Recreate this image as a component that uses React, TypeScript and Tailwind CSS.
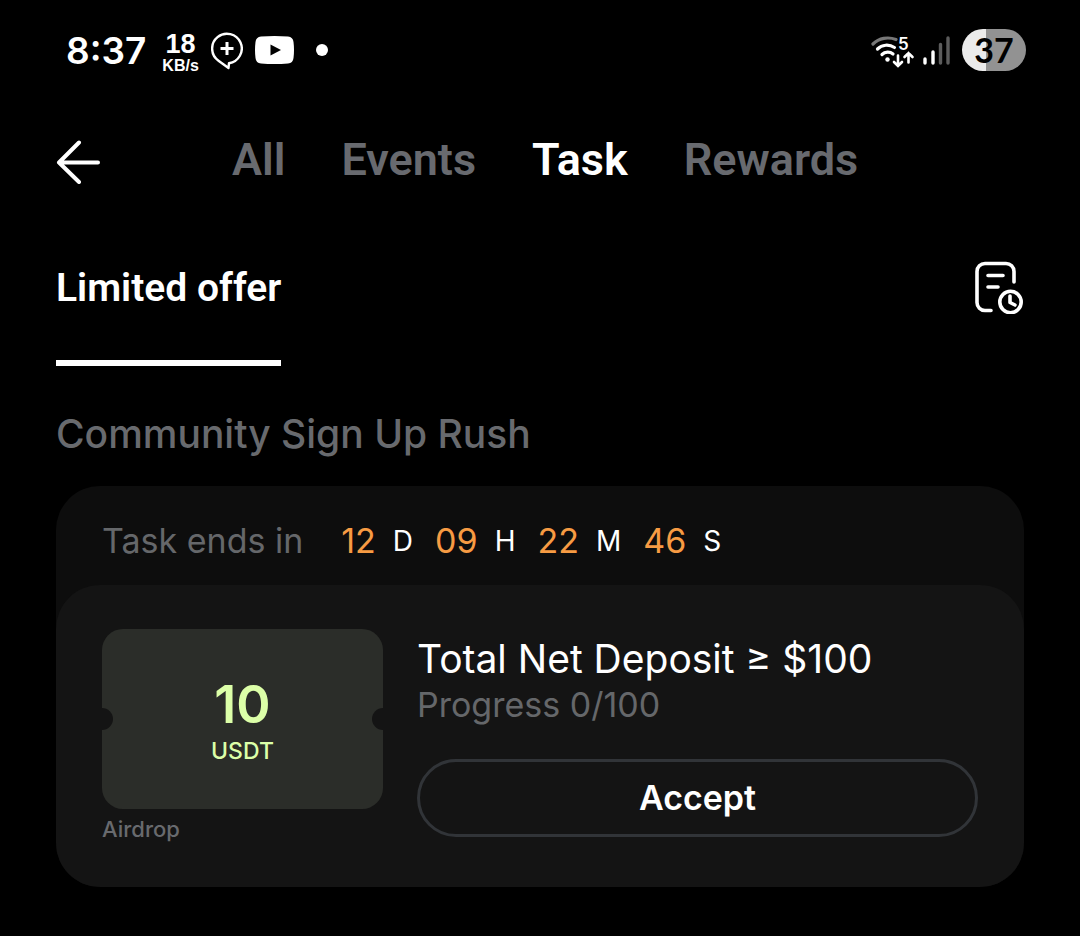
import React from 'react';

const tabs = ["All", "Events", "Task", "Rewards"];

const countdown = [
  { value: "12", unit: "D" },
  { value: "09", unit: "H" },
  { value: "22", unit: "M" },
  { value: "46", unit: "S" }
];

function StatusBar() {
  return (
    <div className="h-[100px] pl-[66px] pr-[54px] flex items-center justify-between">
      <div className="flex items-center">
        <span className="pt-px font-semibold text-[37px] leading-[44px]">8:37</span>
        <div className="ml-4 pt-1 flex flex-col items-center font-['Liberation_Sans'] font-bold">
          <span className="text-[27px] leading-7">18</span>
          <span className="text-base leading-4">KB/s</span>
        </div>
        <svg className="ml-3 w-8 h-10" viewBox="0 0 32 40" fill="none" stroke="currentColor" strokeWidth="2.4" strokeLinejoin="round">
          <path d="M18 33.200A14.800 14.800 0 1 0 7.500 30.700L17.500 38Z" />
          <path d="M16 12v13M9.500 18.500h13" strokeWidth="3" />
        </svg>
        <svg className="ml-3 w-[39px] h-7" viewBox="0 0 39 28">
          <path d="M6 .5Q19.500-.5 33 .5Q38 1 38.500 6Q39.500 14 38.500 22Q38 27 33 27.500Q19.500 28.500 6 27.500Q1 27 .5 22Q-.5 14 .5 6Q1 1 6 .5Z" fill="#fff" />
          <path d="M15.500 8.500v11L26 14z" fill="#000" />
        </svg>
        <span className="ml-[22px] w-3 h-3 rounded-full bg-white" />
      </div>

      <div className="flex items-center">
        {/* wifi with band number and traffic arrows */}
        <div className="relative">
          <svg className="w-11 h-9" viewBox="0 0 44 36" fill="none" stroke="#fff" strokeWidth="3.200" strokeLinecap="round">
            <path d="M2 12C8 6 17 4.500 25 7.500" stroke="#777" />
            <path d="M6.500 17C11 12.500 18 12 23.500 15.500" />
            <path d="M11 22.500C14 19.500 19 19.500 22 22" />
            <circle cx="16.500" cy="27.500" r="2.200" fill="#fff" stroke="none" />
            <path d="M27 23.500v10M23 30l4 4 4-4" strokeWidth="2.600" />
            <path d="M37.500 30.500V21M33.500 25l4-4 4 4" strokeWidth="2.600" />
          </svg>
          <span className="absolute left-[27px] top-[2px] font-semibold text-[17px] leading-5">5</span>
        </div>
        <svg className="ml-2 w-7 h-8" viewBox="0 0 28 32" strokeWidth="3.400" strokeLinecap="round">
          <path d="M2 25v4M10 18v11" stroke="#fff" />
          <path d="M17.500 10.500v18.500M25 4v25" stroke="#5c5c5c" />
        </svg>
        <div className="ml-[11px] w-16 h-[42px] rounded-full bg-linear-to-r from-[#ebebeb] from-37% to-[#929292] to-37% text-black flex items-center justify-center font-['Lato'] font-bold text-[34px] leading-[40px]">
          37
        </div>
      </div>
    </div>
  );
}

function Ticket() {
  return (
    <div>
      <div className="relative overflow-hidden w-[281px] h-[180px] rounded-[21px] bg-[#2b2d29] text-[#dcffa8] flex flex-col items-center justify-center">
        <span className="absolute -left-[11px] top-[79px] w-[22px] h-[22px] rounded-full bg-[#141414]" />
        <span className="absolute -right-[11px] top-[79px] w-[22px] h-[22px] rounded-full bg-[#141414]" />
        <span className="pt-2 font-semibold text-[52px] leading-[56px]">10</span>
        <span className="font-medium text-[23px] leading-9">USDT</span>
      </div>
      <p className="mt-[2px] font-medium text-[22px] leading-9 text-[#686a6e]">Airdrop</p>
    </div>
  );
}

export default function App() {
  return (
    <div className="min-h-screen bg-black text-white font-['Inter',sans-serif]">
      <StatusBar />

      <header className="px-14 h-[124px] flex items-center">
        <button aria-label="Back">
          <svg className="w-11 h-11" viewBox="0 0 44 44" fill="none" stroke="currentColor" strokeWidth="4" strokeLinecap="round" strokeLinejoin="round">
            <path d="M42 22.500H3M23 2.500L3 22.500L23 42" />
          </svg>
        </button>
        <nav className="ml-[132px] pb-1 flex gap-14 font-['Roboto'] font-semibold text-[45px] leading-[52px]">
          {tabs.map((tab) => (
            <button key={tab} className={tab === "Task" ? "text-white" : "text-[#686a6f]"}>
              {tab}
            </button>
          ))}
        </nav>
      </header>

      <div className="px-14 flex items-start justify-between">
        <button className="h-[142px] pt-10 flex items-start border-b-6 border-white font-['Roboto'] font-semibold text-[39px] leading-[48px]">
          Limited offer
        </button>
        <button aria-label="Task history" className="mt-9">
          <svg className="w-[50px] h-[54px]" viewBox="0 0 50 54" fill="none" stroke="currentColor" strokeWidth="3.600" strokeLinecap="round" strokeLinejoin="round">
            <path d="M17 50.500H11a8 8 0 0 1-8-8V11.500a8 8 0 0 1 8-8H32a8 8 0 0 1 8 8V22" />
            <path d="M14 15.500h15M14 27h10" />
            <circle cx="36.500" cy="42" r="10.700" />
            <path d="M36 36v6.500l5 2.500" />
          </svg>
        </button>
      </div>

      <main className="px-14 pb-12">
        <h2 className="pt-[42px] pb-[2px] font-medium text-[39px] leading-[52px] text-[#686a6e]">Community Sign Up Rush</h2>

        <section className="mt-6 rounded-[44px] bg-[#0d0d0d]">
          <div className="h-[99px] pt-[10px] px-[46px] flex items-center text-[34px] leading-[44px]">
            <span className="text-[#65676a]">Task ends in</span>
            <div className="ml-[38px] flex items-center gap-[22px]">
              {countdown.map((part) => (
                <div key={part.unit} className="flex items-center gap-[17px]">
                  <span className="text-[#f79b43]">{part.value}</span>
                  <span className="text-[28px]">{part.unit}</span>
                </div>
              ))}
            </div>
          </div>

          <div className="rounded-[44px] bg-[#141414] pt-11 pb-10 px-[46px] flex gap-[34px]">
            <Ticket />
            <div className="flex-1 pt-1">
              <h3 className="text-[39px] leading-[52px]">Total Net Deposit ≥ $100</h3>
              <p className="text-[34px] leading-10 text-[#65676a]">Progress 0/100</p>
              <button className="mt-[34px] w-full h-[78px] rounded-full border-3 border-[#313438] font-semibold text-[34px] leading-[44px]">
                Accept
              </button>
            </div>
          </div>
        </section>
      </main>
    </div>
  );
}
